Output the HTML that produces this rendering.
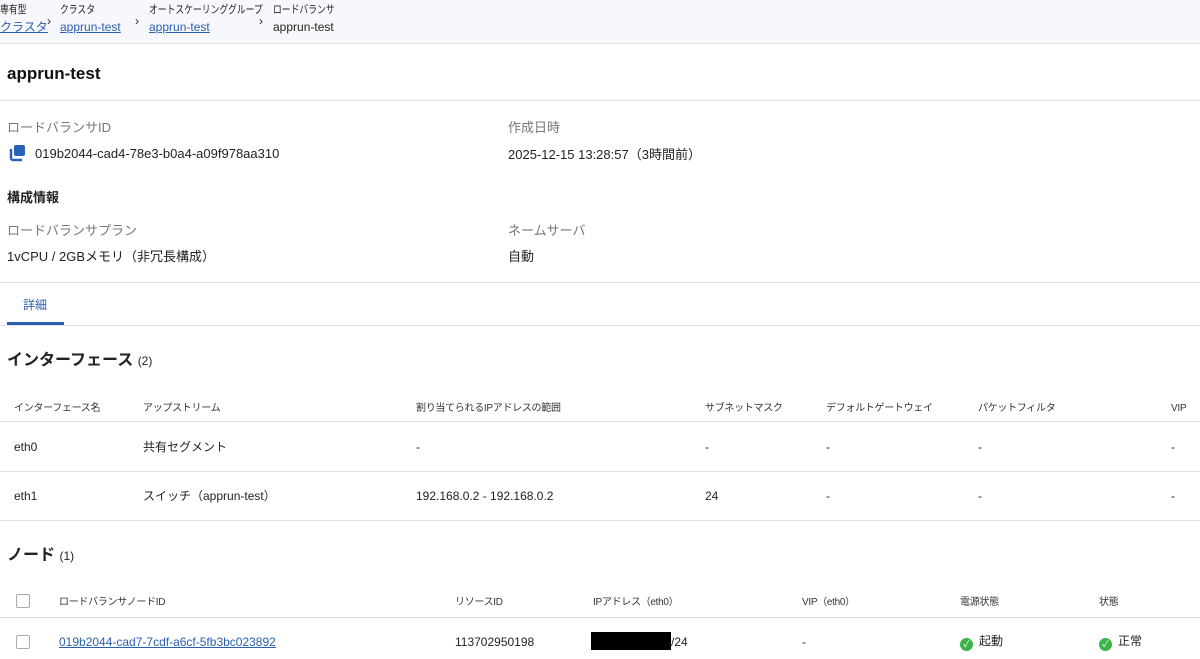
<!DOCTYPE html>
<html><head><meta charset="utf-8"><style>
*{box-sizing:border-box;margin:0;padding:0}
body{width:1200px;height:659px;overflow:hidden;background:#fff;font-family:"Liberation Sans","Noto Sans CJK JP",sans-serif;color:#222;position:relative}
.a{position:absolute;white-space:nowrap;line-height:16px}
.bc{position:absolute;left:0;top:0;width:1200px;height:44px;background:#f7f8fb;border-bottom:1px solid #dfe3ea}
.s{font-size:11px;transform:scaleX(0.8);transform-origin:left}
.l{color:#2a5fb0;text-decoration:underline;font-size:12px}
.g{color:#777;font-size:13px}
.t{font-size:13px}
.th{font-size:10px;color:#333;letter-spacing:-0.3px}
.td{font-size:12px}
.hr{position:absolute;left:0;width:1200px;height:1px;background:#dde1e7}
.cb{position:absolute;width:14px;height:14px;border:1px solid #aaa;border-radius:2px;background:#fff}
.ok{display:inline-block;width:13px;height:13px;border-radius:50%;background:#3bb54a;color:#fff;font-size:9px;text-align:center;line-height:13px;vertical-align:-2px;margin-right:6px}
</style></head><body>
<div class="bc"></div>
<div class="a s" style="left:0;top:2px">専有型</div>
<div class="a l" style="left:0;top:19px">クラスタ</div>
<div class="a" style="left:47px;top:13px;font-size:12px">›</div>
<div class="a s" style="left:60px;top:2px">クラスタ</div>
<div class="a l" style="left:60px;top:19px">apprun-test</div>
<div class="a" style="left:135px;top:13px;font-size:12px">›</div>
<div class="a s" style="left:149px;top:2px">オートスケーリンググループ</div>
<div class="a l" style="left:149px;top:19px">apprun-test</div>
<div class="a" style="left:259px;top:13px;font-size:12px">›</div>
<div class="a s" style="left:273px;top:2px">ロードバランサ</div>
<div class="a" style="left:273px;top:19px;font-size:12px">apprun-test</div>
<div class="a" style="left:7px;top:64px;font-size:17px;line-height:20px;font-weight:bold;color:#111">apprun-test</div>
<div class="hr" style="top:100px"></div>
<div class="a g" style="left:7px;top:120px">ロードバランサID</div>
<svg class="a" style="left:8px;top:144px" width="18" height="18"><rect x="6" y="1" width="11" height="11" rx="2" fill="#2a62b8"/><path d="M3 5v9a2 2 0 0 0 2 2h9" stroke="#2a62b8" stroke-width="2.5" fill="none"/></svg>
<div class="a t" style="left:35px;top:146px">019b2044-cad4-78e3-b0a4-a09f978aa310</div>
<div class="a g" style="left:508px;top:120px">作成日時</div>
<div class="a t" style="left:508px;top:147px">2025-12-15 13:28:57（3時間前）</div>
<div class="a" style="left:7px;top:190px;font-size:13px;font-weight:bold">構成情報</div>
<div class="a g" style="left:7px;top:223px">ロードバランサプラン</div>
<div class="a t" style="left:7px;top:249px">1vCPU / 2GBメモリ（非冗長構成）</div>
<div class="a g" style="left:508px;top:223px">ネームサーバ</div>
<div class="a t" style="left:508px;top:249px">自動</div>
<div class="hr" style="top:282px"></div>
<div class="a" style="left:23px;top:297px;font-size:12px;color:#2a5fb0">詳細</div>
<div class="a" style="left:7px;top:322px;width:57px;height:3px;background:#2a5fb0"></div>
<div class="hr" style="top:325px"></div>
<div class="a" style="left:7px;top:351px;font-size:16px;line-height:20px;font-weight:bold">インターフェース <span style="font-size:12px;font-weight:normal">(2)</span></div>
<div class="a th" style="left:14px;top:401px">インターフェース名</div>
<div class="a th" style="left:143px;top:401px">アップストリーム</div>
<div class="a th" style="left:416px;top:401px">割り当てられるIPアドレスの範囲</div>
<div class="a th" style="left:705px;top:401px">サブネットマスク</div>
<div class="a th" style="left:826px;top:401px">デフォルトゲートウェイ</div>
<div class="a th" style="left:978px;top:401px">パケットフィルタ</div>
<div class="a th" style="left:1171px;top:401px">VIP</div>
<div class="hr" style="top:421px"></div>
<div class="a td" style="left:14px;top:439px">eth0</div><div class="a td" style="left:143px;top:439px">共有セグメント</div><div class="a td" style="left:416px;top:439px">-</div><div class="a td" style="left:705px;top:439px">-</div><div class="a td" style="left:826px;top:439px">-</div><div class="a td" style="left:978px;top:439px">-</div><div class="a td" style="left:1171px;top:439px">-</div>
<div class="hr" style="top:471px"></div>
<div class="a td" style="left:14px;top:488px">eth1</div><div class="a td" style="left:143px;top:488px">スイッチ（apprun-test）</div><div class="a td" style="left:416px;top:488px">192.168.0.2 - 192.168.0.2</div><div class="a td" style="left:705px;top:488px">24</div><div class="a td" style="left:826px;top:488px">-</div><div class="a td" style="left:978px;top:488px">-</div><div class="a td" style="left:1171px;top:488px">-</div>
<div class="hr" style="top:520px"></div>
<div class="a" style="left:7px;top:546px;font-size:16px;line-height:20px;font-weight:bold">ノード <span style="font-size:12px;font-weight:normal">(1)</span></div>
<div class="cb" style="left:16px;top:594px"></div>
<div class="a th" style="left:59px;top:595px">ロードバランサノードID</div>
<div class="a th" style="left:455px;top:595px">リソースID</div>
<div class="a th" style="left:593px;top:595px">IPアドレス（eth0）</div>
<div class="a th" style="left:802px;top:595px">VIP（eth0）</div>
<div class="a th" style="left:960px;top:595px">電源状態</div>
<div class="a th" style="left:1099px;top:595px">状態</div>
<div class="hr" style="top:617px"></div>
<div class="cb" style="left:16px;top:635px"></div>
<div class="a l" style="left:59px;top:634px">019b2044-cad7-7cdf-a6cf-5fb3bc023892</div>
<div class="a td" style="left:455px;top:634px">113702950198</div>
<div class="a" style="left:591px;top:632px;width:80px;height:18px;background:#000"></div>
<div class="a td" style="left:671px;top:634px">/24</div>
<div class="a td" style="left:802px;top:634px">-</div>
<div class="a td" style="left:960px;top:633px"><span class="ok">✓</span>起動</div>
<div class="a td" style="left:1099px;top:633px"><span class="ok">✓</span>正常</div>
</body></html>
